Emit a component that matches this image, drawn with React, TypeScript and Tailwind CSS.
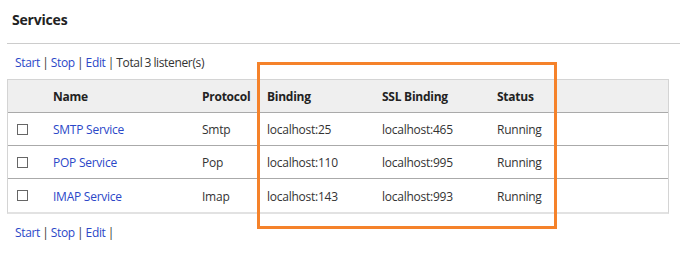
import React from "react";

interface Listener {
  name: string;
  protocol: string;
  binding: string;
  ssl: string;
  status: string;
}

const listeners: Listener[] = [
  { name: "SMTP Service", protocol: "Smtp", binding: "localhost:25", ssl: "localhost:465", status: "Running" },
  { name: "POP Service", protocol: "Pop", binding: "localhost:110", ssl: "localhost:995", status: "Running" },
  { name: "IMAP Service", protocol: "Imap", binding: "localhost:143", ssl: "localhost:993", status: "Running" },
];

const cols = "grid grid-cols-[45px_149px_65px_115px_115px_1fr] items-center";

function Actions({ total }: { total?: number }) {
  return (
    <div className="pl-[15px] text-[12px] tracking-[-0.35px] [word-spacing:-0.5px] text-[#333]">
      <a className="text-[#2b47c8]">Start</a> | <a className="text-[#2b47c8]">Stop</a> |{" "}
      <a className="text-[#2b47c8]">Edit</a> |{total !== undefined && ` Total ${total} listener(s)`}
    </div>
  );
}

export default function App() {
  return (
    <div
      className="relative w-[680px] h-[253px] bg-white text-[#333]"
      style={{ fontFamily: '"Segoe UI", "Open Sans", "Noto Sans", sans-serif' }}
    >
      {/* Header */}
      <div className="h-[43px] pl-[12px] pt-[9px] text-[14px] font-bold tracking-[-0.2px] text-[#222]">Services</div>
      <div className="ml-[7px] border-t border-[#cccccc]" />

      <div className="pt-[10px] h-[35px]">
        <Actions total={3} />
      </div>

      {/* Table */}
      <div className="ml-[7px] w-[662px] border border-[#d4d4d4] border-b-2 border-b-[#e2e2e2] tracking-[-0.25px]">
        <div className={`${cols} h-[33px] pt-[2px] bg-[#efefef] border-b border-[#aaaaaa] text-[12px] font-bold text-[#222]`}>
          <div />
          <div>Name</div>
          <div>Protocol</div>
          <div>Binding</div>
          <div>SSL Binding</div>
          <div>Status</div>
        </div>
        {listeners.map((l, i) => (
          <div
            key={l.name}
            className={`${cols} h-[33px] pt-[2px] text-[12px] ${i < listeners.length - 1 ? "border-b border-[#aaaaaa]" : ""}`}
          >
            <div className="pl-[9px]">
              <div className="w-[11px] h-[11px] -mt-[2px] border border-[#666] bg-white" />
            </div>
            <a className="text-[#2b47c8]">{l.name}</a>
            <div>{l.protocol}</div>
            <div>{l.binding}</div>
            <div>{l.ssl}</div>
            <div>{l.status}</div>
          </div>
        ))}
      </div>

      <div className="pt-[10px]">
        <Actions />
      </div>

      {/* highlight box */}
      <div className="absolute left-[257px] top-[62px] w-[300px] h-[167px] border-[3px] border-[#f5822a]" />
    </div>
  );
}
